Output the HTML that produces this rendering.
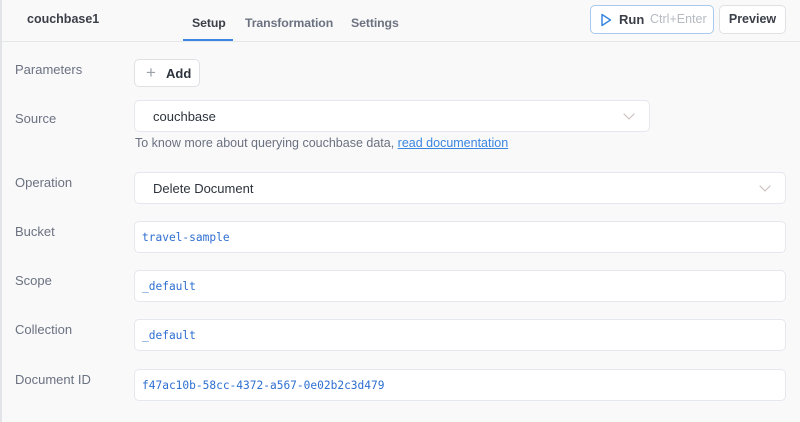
<!DOCTYPE html>
<html><head><style>
*{box-sizing:border-box;margin:0;padding:0}
body{width:800px;height:422px;overflow:hidden;background:#f9f9fa;font-family:"Liberation Sans",sans-serif;font-size:13px;color:#3a3f47;position:relative}
.hdr{position:absolute;left:0;top:0;width:800px;height:42px;background:#f9f9fa;border-bottom:1px solid #e6e7ea}
.abs{position:absolute}
.lbl{position:absolute;left:15px;color:#6a7180;font-size:13px}
.box{position:absolute;left:134px;background:#fff;border:1px solid #e4e7ec;border-radius:5px;height:32px}
.mono{font-family:"DejaVu Sans Mono",monospace;font-size:11.2px;color:#2e6fd1;position:absolute;left:7px;top:9px}
.txt{position:absolute;left:18px;top:8px;color:#2d333c}
.chev{position:absolute;top:11px;width:8px;height:8px;border-right:1.5px solid #c8bcbc;border-bottom:1.5px solid #c8bcbc;transform:rotate(45deg)}
.tab{position:absolute;top:16px;font-weight:bold;font-size:12.3px;letter-spacing:-0.1px}
</style></head><body>
<div class="abs" style="left:0;top:0;width:2px;height:422px;background:#e3e4e8;z-index:5"></div>
<div class="hdr">
<div class="abs" style="left:27px;top:12px;font-weight:bold;font-size:12.5px;color:#3a3f47">couchbase1</div>
<div class="tab" style="left:192px;color:#3a3f47">Setup</div>
<div class="abs" style="left:183px;top:39px;width:50px;height:2px;background:#3a86e0"></div>
<div class="tab" style="left:245px;color:#6b7280">Transformation</div>
<div class="tab" style="left:351px;color:#6b7280">Settings</div>
<div class="abs" style="left:590px;top:5px;width:124px;height:29px;border:1px solid #a9c9f0;border-radius:5px;background:#fff">
<svg class="abs" style="left:9px;top:7px" width="12" height="14"><path d="M2 1.5 L10.5 7 L2 12.5 Z" fill="none" stroke="#3a86e0" stroke-width="1.5" stroke-linejoin="round"/></svg>
<span class="abs" style="left:28px;top:6px;font-weight:bold;color:#3a3f47">Run</span>
<span class="abs" style="left:59px;top:6px;color:#b5bac2;font-size:12.5px">Ctrl+Enter</span></div>
<div class="abs" style="left:719px;top:5px;width:67px;height:29px;border:1px solid #dfe1e5;border-radius:5px;background:#fff;text-align:center;line-height:27px;font-weight:bold;color:#3a3f47;font-size:12.5px">Preview</div>
</div>
<div class="lbl" style="top:62px">Parameters</div>
<div class="abs" style="left:134px;top:59px;width:66px;height:28px;border:1px solid #dfe1e5;border-radius:5px;background:#fff"><span class="abs" style="left:11px;top:3px;color:#9aa0a8;font-size:17px">+</span><span class="abs" style="left:31px;top:6px;font-weight:bold;color:#2d333c">Add</span></div>
<div class="lbl" style="top:111px">Source</div>
<div class="box" style="top:100px;width:516px"><span class="txt">couchbase</span><div class="chev" style="left:490px;top:9px"></div></div>
<div class="abs" style="left:135px;top:136px;color:#6a7180;font-size:12.5px">To know more about querying couchbase data, <span style="color:#3a86e0;text-decoration:underline">read documentation</span></div>
<div class="lbl" style="top:175px">Operation</div>
<div class="box" style="top:172px;width:652px"><span class="txt">Delete Document</span><div class="chev" style="left:626px;top:9px"></div></div>
<div class="lbl" style="top:224px">Bucket</div>
<div class="box" style="top:221px;width:652px"><span class="mono">travel-sample</span></div>
<div class="lbl" style="top:273px">Scope</div>
<div class="box" style="top:270px;width:652px"><span class="mono">_default</span></div>
<div class="lbl" style="top:322px">Collection</div>
<div class="box" style="top:319px;width:652px"><span class="mono">_default</span></div>
<div class="lbl" style="top:372px">Document ID</div>
<div class="box" style="top:369px;width:652px"><span class="mono">f47ac10b-58cc-4372-a567-0e02b2c3d479</span></div>
</body></html>
